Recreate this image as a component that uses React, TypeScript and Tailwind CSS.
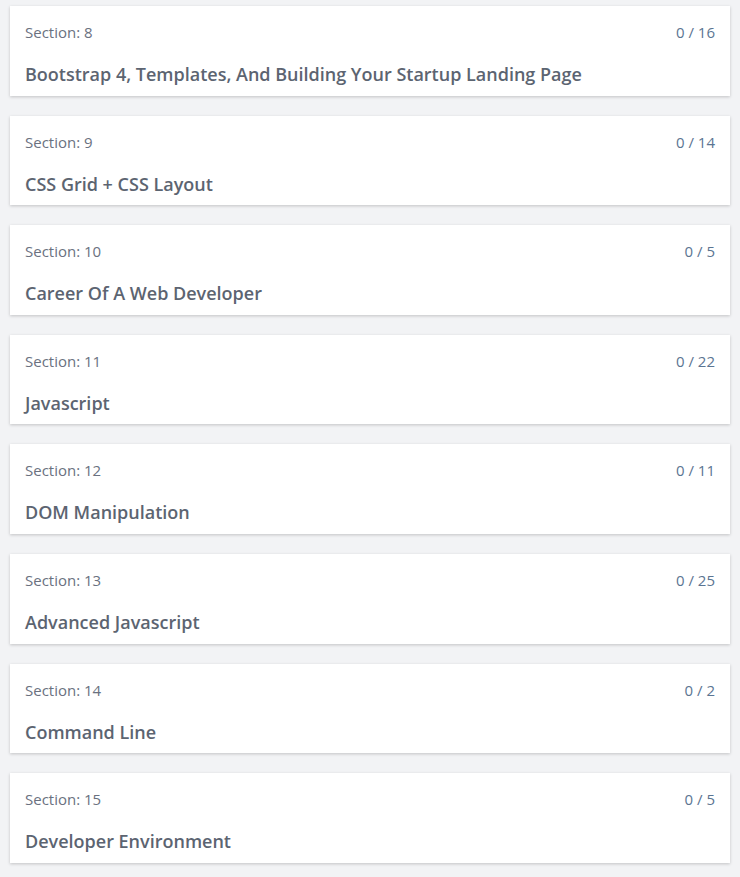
import React from 'react';

const sections = [
  { n: 8, title: 'Bootstrap 4, Templates, And Building Your Startup Landing Page', total: 16 },
  { n: 9, title: 'CSS Grid + CSS Layout', total: 14 },
  { n: 10, title: 'Career Of A Web Developer', total: 5 },
  { n: 11, title: 'Javascript', total: 22 },
  { n: 12, title: 'DOM Manipulation', total: 11 },
  { n: 13, title: 'Advanced Javascript', total: 25 },
  { n: 14, title: 'Command Line', total: 2 },
  { n: 15, title: 'Developer Environment', total: 5 },
];

function App() {
  return (
    <div className="min-h-screen bg-[#f2f3f5] px-[10px] pt-[6px] pb-4 font-['Open_Sans',sans-serif]">
      <div className="flex flex-col gap-[20px]">
        {sections.map((s) => (
          <div
            key={s.n}
            className="h-[89.6px] bg-white px-[15px] pt-[16px] shadow-[0_1px_3px_rgba(0,0,0,0.2)]"
          >
            <div className="flex items-center justify-between text-[15px] leading-[20px]">
              <span className="text-[#6a7180]">Section: {s.n}</span>
              <span className="text-[#5b7592]">0 / {s.total}</span>
            </div>
            <div className="mt-[20px] text-[18px] font-semibold leading-[24px] text-[#5c6471]">
              {s.title}
            </div>
          </div>
        ))}
      </div>
    </div>
  );
}

export default App;
